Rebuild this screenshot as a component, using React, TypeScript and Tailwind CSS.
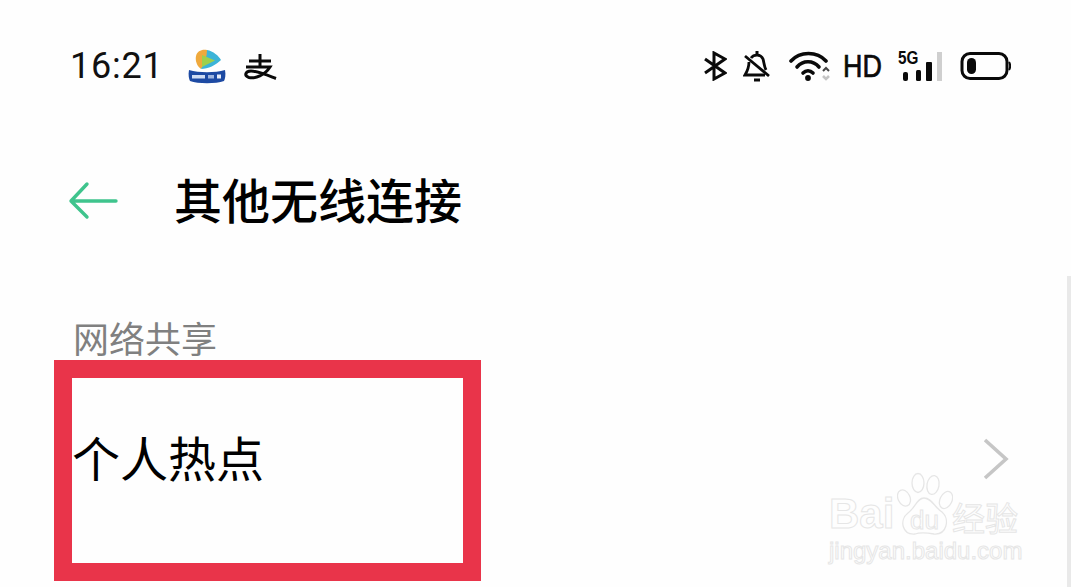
import React from "react";

const cjk = { fontFamily: '"Noto Sans CJK SC", "Noto Sans", sans-serif' };
const latin = { fontFamily: '"Liberation Sans", sans-serif' };

function Bluetooth() {
  return (
    <svg width="24" height="30" viewBox="0 0 24 30" fill="none" stroke="#0a0a0a" strokeWidth="3">
      <path d="M2 8 L22 22 L11 28 V2 L22 8 L2 22" />
    </svg>
  );
}

function BellOff() {
  return (
    <svg width="28" height="32" viewBox="0 0 28 32" fill="none" stroke="#0a0a0a" strokeWidth="2.8">
      <path d="M8 8 C11 4 18 4 20 9 C21 12 21 16 23 20 M6 12 C6 17 5 20 2 25 H22" />
      <path d="M14 1 V5" strokeWidth="3" />
      <path d="M2 6 L26 26" />
      <path d="M11 30 H17" strokeWidth="3" />
    </svg>
  );
}

function Wifi() {
  return (
    <svg width="42" height="32" viewBox="0 0 42 32" fill="none">
      <g stroke="#0a0a0a" strokeWidth="3.6" strokeLinecap="round">
        <path d="M2 11 C11 1 28 1 37 11" />
        <path d="M8 17 C14 10 24 10 30 17" />
        <path d="M14 23 C17 20 21 20 24 23" />
      </g>
      <circle cx="19" cy="28" r="2.9" fill="#0a0a0a" />
      <path d="M34 21 L37 18 L40 21" stroke="#444" strokeWidth="2" />
      <path d="M34 26 L37 29 L40 26" stroke="#c4c4c4" strokeWidth="2.6" />
    </svg>
  );
}

function Signal() {
  return (
    <svg width="44" height="30" viewBox="0 0 44 30">
      <rect x="5" y="21" width="5" height="9" rx="2" fill="#0a0a0a" />
      <rect x="18" y="19" width="5" height="11" rx="1.5" fill="#0a0a0a" />
      <rect x="28" y="11" width="6" height="19" rx="1" fill="#0a0a0a" />
      <rect x="39" y="1" width="5" height="29" fill="#cfcfcf" />
    </svg>
  );
}

function Battery() {
  return (
    <svg width="51" height="30" viewBox="0 0 51 30" fill="none">
      <rect x="2" y="2.5" width="45" height="25" rx="8" stroke="#0a0a0a" strokeWidth="3" />
      <rect x="7" y="7" width="9" height="16" rx="4.5" fill="#0a0a0a" />
      <path d="M49 11 C50.5 13 50.5 17 49 19" stroke="#0a0a0a" strokeWidth="2" />
    </svg>
  );
}

function VideoLogo() {
  return (
    <svg width="38" height="36" viewBox="0 0 38 36">
      <path d="M8 8 C9 3 14 1 19 2 C21 6 19 14 13 21 C9 18 7 13 8 8Z" fill="#efa93c" />
      <path d="M19 2 C25 3 31 8 33 12 C28 17 20 21 13 21 C17 15 19 8 19 2Z" fill="#3cb4d8" />
      <path d="M14 7 L27 12.5 L14 19Z" fill="#9ed04c" />
      <path d="M1 22 C11 25 27 25 37 22 C38 27 37 31 36 33 C28 36 10 36 2 33 C1 31 0 27 1 22Z" fill="#1d4aa3" />
      <rect x="4" y="27" width="13" height="3.5" fill="#cfdcf3" />
      <rect x="20" y="27" width="6" height="3.5" fill="#9fb6e0" />
      <rect x="29" y="26.5" width="4" height="4" fill="#e6ecf8" />
    </svg>
  );
}

function AlipayMark() {
  return (
    <svg width="34" height="28" viewBox="0 0 34 28" fill="none" stroke="#0a0a0a" strokeWidth="3">
      <path d="M6 9 H28 M17 2 V15" />
      <path d="M3 15 H27 C22 23 12 27 6 25.5 C1 24 2 19 8 19 C15 19 24 23 33 26.5" />
    </svg>
  );
}

function Watermark() {
  const outline = "text-transparent [-webkit-text-stroke:1px_#e6e6e6]";
  return (
    <div className="absolute left-[829px] top-[470px] h-[96px] w-[194px]">
      <span className={`absolute left-0 top-[24px] text-[42px] font-bold leading-[40px] ${outline}`} style={latin}>
        Bai
      </span>
      <svg className="absolute left-[68px] top-[2px]" width="56" height="68" viewBox="0 0 56 68" fill="none" stroke="#e6e6e6" strokeWidth="1.3">
        <ellipse cx="7" cy="26" rx="6" ry="8.5" transform="rotate(-25 7 26)" />
        <ellipse cx="21" cy="11" rx="6" ry="9.5" />
        <ellipse cx="36" cy="13" rx="6" ry="9.5" transform="rotate(10 36 13)" />
        <ellipse cx="49" cy="28" rx="6" ry="9" transform="rotate(25 49 28)" />
        <path d="M27 26 C35 26 37 35 45 40 C53 47 50 63 37 62 C31 61 24 60 18 62 C5 63 2 48 11 41 C18 36 20 26 27 26Z" />
      </svg>
      <span className={`absolute left-[81px] top-[37px] text-[26px] leading-[26px] ${outline}`} style={latin}>
        du
      </span>
      <span className={`absolute left-[123px] top-[28px] text-[33px] leading-[38px] ${outline}`} style={cjk}>
        经验
      </span>
      <span className={`absolute left-0 top-[68px] whitespace-nowrap text-[24px] leading-[26px] ${outline}`} style={latin}>
        jingyan.baidu.com
      </span>
    </div>
  );
}

export default function App() {
  return (
    <div className="relative h-[587px] w-[1080px] overflow-hidden bg-white" style={cjk}>
      <div className="flex h-[587px] w-[1071px] flex-col bg-[#fefefe]">
        <div className="flex h-[167px] items-start justify-between pl-[70px] pr-[60px] pt-[46px]">
          <div className="flex h-[40px] items-center">
            <span className="text-[36px] leading-[40px] tracking-[0.8px] text-[#111]" style={{ fontFamily: '"Roboto", sans-serif' }}>
              16:21
            </span>
            <span className="ml-[24px]"><VideoLogo /></span>
            <span className="ml-[17px]"><AlipayMark /></span>
          </div>
          <div className="flex h-[40px] items-center">
            <Bluetooth />
            <span className="ml-[16px]"><BellOff /></span>
            <span className="ml-[18px]"><Wifi /></span>
            <span className="ml-[14px] flex w-[35px] scale-x-[0.84] justify-center text-[32px] leading-[40px] text-[#0a0a0a] [-webkit-text-stroke:0.7px_#0a0a0a]" style={latin}>
              HD
            </span>
            <span className="relative ml-[18px] h-[30px] w-[44px]">
              <Signal />
              <span className="absolute left-0 top-[-2px] origin-left scale-x-[0.85] text-[18px] font-bold leading-[18px] text-[#0a0a0a]" style={latin}>
                5G
              </span>
            </span>
            <span className="ml-[18px]"><Battery /></span>
          </div>
        </div>

        <div className="flex h-[68px] items-center pl-[68px]">
          <svg width="50" height="40" viewBox="0 0 50 40" fill="none" stroke="#3fc48d" strokeWidth="3.4" strokeLinecap="round" strokeLinejoin="round">
            <path d="M48 20 H3 M19 3 L3 20 L19 36" />
          </svg>
          <h1 className="ml-[56px] pb-[6px] text-[48px] font-medium leading-[62px] text-black">其他无线连接</h1>
        </div>

        <div className="flex h-[125px] items-end pl-[73px]">
          <span className="text-[36px] leading-[46px] text-[#808080]">网络共享</span>
        </div>

        <div className="relative flex h-[227px] items-center pb-[30px] pl-[72px] pr-[62px]">
          <span className="pb-[6px] text-[48px] leading-[60px] text-black">个人热点</span>
          <svg className="ml-auto" width="26" height="42" viewBox="0 0 26 42" fill="none" stroke="#c6c6c6" strokeWidth="3.6">
            <path d="M2 2 L23 21 L2 40" />
          </svg>
          <div className="absolute left-[54px] top-0 h-[221px] w-[427px] border-[18px] border-[#e9344a]" />
        </div>
      </div>
      <Watermark />
      <div className="absolute right-[9px] top-[276px] h-[311px] w-[4px] bg-[#e9e9e9]" />
    </div>
  );
}
